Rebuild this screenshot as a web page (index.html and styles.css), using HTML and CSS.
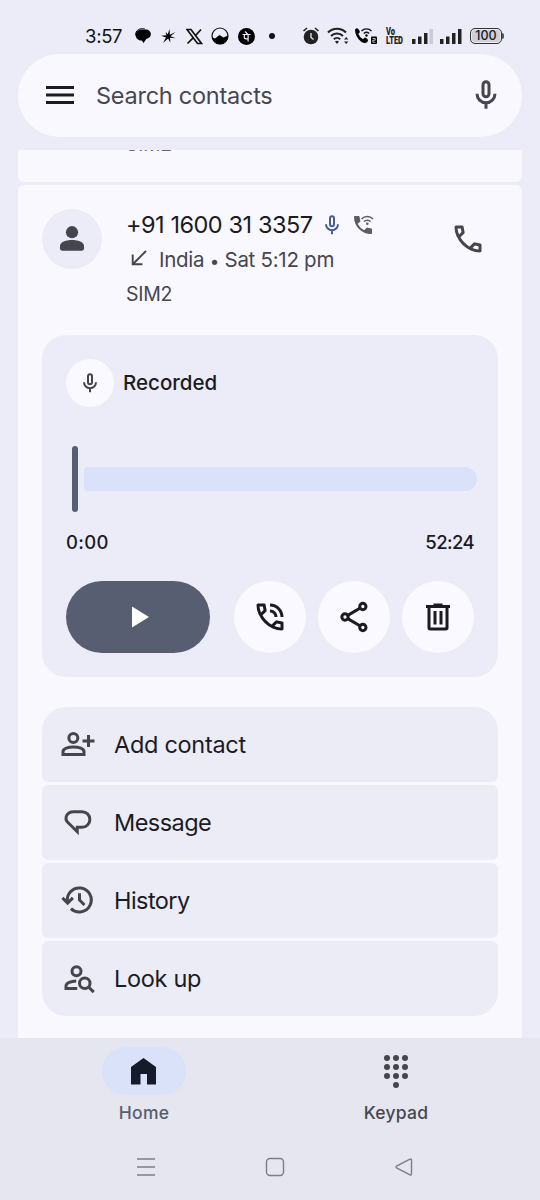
FILE: index.html
```html
<!DOCTYPE html>
<html lang="en">
<head>
<meta charset="utf-8">
<title>Phone</title>
<link rel="stylesheet" href="styles.css">
</head>
<body>
<svg class="defs" width="0" height="0">
  <symbol id="mic" viewBox="0 0 24 24"><g fill="none" stroke="currentColor" stroke-width="2"><rect x="10" y="3.200" width="4" height="10" rx="2"/><path d="M6 11.200a6 6 0 0 0 12 0M12 17.200v4"/></g></symbol>
  <symbol id="call" viewBox="0 0 24 24"><path fill="currentColor" d="M19.950 21q-3.125 0-6.175-1.362T8.225 15.775 4.363 10.225 3 4.050q0-.45.3-.75t.75-.3H8.100q.35 0 .625.238t.325.562l.65 3.500q.05.4-.025.675T9.400 8.450L6.975 10.900q.5.925 1.187 1.787t1.513 1.663q.775.775 1.625 1.438T13.100 17l2.350-2.350q.225-.225.588-.337t.712-.063l3.450.7q.35.1.575.363T21 15.900v4.050q0 .45-.3.750t-.75.3zM6.025 9l1.650-1.650L7.250 5H5.025q.125 1.025.35 2.025T6.025 9zm8.950 8.950q.975.425 1.988.675T19 18.950v-2.200l-2.350-.475z"/></symbol>
  <symbol id="wifi-call" viewBox="0 0 24 24"><path fill="currentColor" d="M20 15.500c-1.250 0-2.450-.2-3.570-.57a1 1 0 0 0-1.020.24l-2.200 2.200a15.050 15.050 0 0 1-6.590-6.580l2.200-2.210a1 1 0 0 0 .25-1.010A11.400 11.400 0 0 1 8.500 4a1 1 0 0 0-1-1H4a1 1 0 0 0-1 1c0 9.390 7.610 17 17 17a1 1 0 0 0 1-1v-3.500a1 1 0 0 0-1-1z"/><path fill="currentColor" d="M3.500 3.500H8L9.500 8.500 6 11zM21 20.500V16l-5-1.500-3 3.500z"/><g fill="none" stroke="currentColor" stroke-width="1.500"><path d="M10.500 6a8 8 0 0 1 11.500 0M13 8.600a4.600 4.600 0 0 1 6.600 0"/></g><circle cx="16.300" cy="10.800" r="1.300" fill="currentColor"/></symbol>
</svg>

<header class="status">
  <span class="clock">3:57</span>
  <svg class="s-chat" width="16" height="16" viewBox="0 0 16 16"><path d="M5.500 1.500H11a4.600 4.600 0 0 1 .5 9.200L8.500 15 6.800 12.500A5.500 5.500 0 0 1 5.500 1.500z"/><path d="M.8 7.500a5.500 5.500 0 0 1 5-6.700h4" stroke="#111" fill="none"/></svg>
  <svg class="s-star" width="15" height="15" viewBox="0 0 15 15"><path d="M8.500 0l.3 5.800L14.500 3 9.500 7.200l5 2-5.400-.5.200 4.800-2.200-4L2 14l3-5.500L0 6.800l5.500-.6L4.500 3l2.300 2.300z"/></svg>
  <svg class="s-x" width="17" height="17" viewBox="0 0 17 17"><path d="M1 1.500h4l10.500 14h-4zM15 1.500L9.600 7.500M7.400 9.700L1.500 15.500" fill="none" stroke="#111" stroke-width="1.700"/></svg>
  <svg class="s-wave" width="18" height="18" viewBox="0 0 18 18"><circle cx="9" cy="9" r="8" fill="none" stroke="#111" stroke-width="1.200"/><path d="M1 10l3 1.500L8.500 8l4 2.500L17 8.500A8 8 0 1 1 1 10z"/></svg>
  <svg class="s-pay" width="17" height="17" viewBox="0 0 17 17"><circle cx="8.500" cy="8.500" r="8.500"/><path d="M4.500 6.500h8M6.300 6.500v3.300q0 1.300 3.800 1M10.100 6.500v7M7 3.500l3 3" fill="none" stroke="#ececf8" stroke-width="1.200"/></svg>
  <span class="dot"></span>
  <svg class="s-alarm" width="18" height="18" viewBox="0 0 18 18"><circle cx="9" cy="10" r="7.300" fill="#222"/><path d="M1.500 4L5 1M16.500 4L13 1" stroke="#222" stroke-width="1.600"/><path d="M9 6v4.500l2.500 2" fill="none" stroke="#ececf8" stroke-width="1.300"/></svg>
  <svg class="s-wifi" width="23" height="18" viewBox="0 0 23 18"><g fill="none" stroke="#222" stroke-width="2"><path d="M1 5.500a12.500 12.500 0 0 1 18 0M4 9a8.300 8.300 0 0 1 12 0M6.800 12.300a4.600 4.600 0 0 1 6.400 0"/></g><path fill="#222" d="M8 14.500q2-1.300 4 0l-2 2.500zM17 12.500l2.200-2.500 2.200 2.500zM17 14.500l2.200 2.500 2.200-2.500z"/></svg>
  <svg class="s-call" width="24" height="20" viewBox="0 0 24 20"><path d="M1 3.500q2.500-2.500 4 .5l1 2-1.700 2q1.600 3.500 4.600 5.200l2-1.600q4 1.700 2.800 3.800-2 3-6.200.6Q1 11 1 3.500z"/><path d="M7.500 5a7 7 0 0 1 10 0M9.800 7.500a4 4 0 0 1 5.400 0" fill="none" stroke="#111" stroke-width="1.400"/><circle cx="12.500" cy="9.500" r="1.200"/><rect x="17" y="10.500" width="6" height="7.500" rx="1"/><path d="M18.700 12.500h2.500v1.700h-2.400v2h2.600" fill="none" stroke="#ececf8" stroke-width=".8"/></svg>
  <span class="volte"><b>Vo</b><b>LTED</b></span>
  <svg class="s-bars" width="52" height="17" viewBox="0 0 52 17"><rect x="1" y="11" width="3.500" height="5"/><rect x="7" y="8.500" width="3.500" height="7.500"/><rect x="13" y="5" width="3.500" height="11"/><rect x="18.500" y="1" width="3.500" height="15" fill="#cacad3"/><rect x="29" y="11" width="3.500" height="5"/><rect x="35" y="8.500" width="3.500" height="7.500"/><rect x="41" y="5" width="3.500" height="11"/><rect x="47" y="1" width="3.500" height="15"/></svg>
  <span class="battery">100</span><i class="battery-tip"></i>
</header>

<div class="search">
  <svg width="28" height="20" viewBox="0 0 28 20"><path d="M0 2.500h28M0 10h28M0 17.500h28" stroke="#1b1b21" stroke-width="2.900"/></svg>
  <span class="placeholder">Search contacts</span>
  <svg class="search-mic" width="36" height="36"><use href="#mic"/></svg>
</div>

<main class="list">
  <section class="previous"><span>SIM2</span></section>
  <section class="entry">
    <div class="summary">
      <div class="avatar"><svg width="24" height="25" viewBox="0 0 24 25"><circle cx="12" cy="6.200" r="6.100"/><path d="M0 20c0-8 24-8 24 0v2.200a2.500 2.500 0 0 1-2.500 2.500h-19A2.500 2.500 0 0 1 0 22.200z"/></svg></div>
      <div class="details">
        <div class="line number"><span class="num">+91 1600 31 3357</span><svg class="blue" width="24" height="24"><use href="#mic"/></svg><svg class="wc" width="24" height="24"><use href="#wifi-call"/></svg></div>
        <div class="line place"><svg width="16" height="16" viewBox="0 0 16 16"><path d="M15 1L2 14M1.700 4.500v9.800h9.800" fill="none" stroke="#46464f" stroke-width="1.900"/></svg><span>India <span class="bullet">•</span> Sat 5:12 pm</span></div>
        <div class="line sim">SIM2</div>
      </div>
      <svg class="dial" width="36" height="36"><use href="#call"/></svg>
    </div>

    <div class="recording">
      <div class="rec-head"><span class="rec-icon"><svg width="24" height="24"><use href="#mic"/></svg></span><span class="rec-title">Recorded</span></div>
      <div class="track"><i class="thumb"></i><i class="bar"></i></div>
      <div class="times"><span>0:00</span><span>52:24</span></div>
      <div class="actions">
        <span class="play"><svg width="17" height="22" viewBox="0 0 17 22"><path d="M0 .5l17 10.500L0 21.500z" fill="#fff"/></svg></span>
        <span class="round"><svg width="36" height="36" viewBox="0 0 24 24"><use href="#call"/><path fill="currentColor" d="M19 12h2c0-4.970-4.030-9-9-9v2c3.870 0 7 3.130 7 7zm-4 0h2c0-2.760-2.240-5-5-5v2c1.660 0 3 1.340 3 3z"/></svg></span>
        <span class="round"><svg width="36" height="36" viewBox="0 0 24 24" fill="none" stroke="currentColor" stroke-width="2"><circle cx="17.900" cy="5" r="2.100"/><circle cx="6" cy="12" r="2.100"/><circle cx="17.900" cy="19" r="2.100"/><path d="M7.800 10.900L16.200 6M7.800 13.100l8.400 4.900"/></svg></span>
        <span class="round"><svg width="36" height="36" viewBox="0 0 24 24" fill="none" stroke="currentColor" stroke-width="2"><path d="M4 5h16M9 4h6M6 5v14.200q0 .8.800.8h10.400q.8 0 .8-.8V5M10 8v9M14 8v9"/></svg></span>
      </div>
    </div>

    <nav class="menu">
      <a><svg width="36" height="36" viewBox="0 0 24 24" fill="none" stroke="currentColor" stroke-width="2"><circle cx="8.900" cy="8" r="3"/><path d="M2 19v-1.900c0-4.100 14-4.100 14 0V19zM19 6v8M15 10h8"/></svg><span>Add contact</span></a>
      <a><svg width="36" height="36" viewBox="0 0 24 24" fill="none" stroke="currentColor" stroke-width="2"><path d="M11.500 18.500V15.500h3.200a5.200 5.200 0 0 0 0-10.400H9C4.400 5.100 2.600 9.600 5.300 12.300z"/></svg><span>Message</span></a>
      <a><svg width="36" height="36" viewBox="0 0 24 24" fill="none" stroke="currentColor" stroke-width="2"><path d="M5 13.500a8 8 0 1 1 2.300 4.200M1.600 10.600l3.500 3.500 3.500-3.500M13 7.500V12l3.300 3.300"/></svg><span>History</span></a>
      <a><svg width="36" height="36" viewBox="0 0 24 24" fill="none" stroke="currentColor" stroke-width="2"><circle cx="11" cy="7.500" r="3"/><path d="M10.800 14c-3.300.1-6.800 1.300-6.800 3.300V19h7.500M18.900 17.800l3.600 3.600"/><circle cx="16.500" cy="15.500" r="3.500"/></svg><span>Look up</span></a>
    </nav>
  </section>
</main>

<footer class="bottom">
  <div class="tabs">
    <div class="tab home"><span class="pill"><svg width="25" height="27" viewBox="0 0 25 27"><path d="M12.500 0L25 9V26.500H16V16H9.500v10.500H0V9z" fill="#151a2c"/></svg></span><span>Home</span></div>
    <div class="tab"><span class="pill"><svg width="24" height="33" viewBox="0 0 24 33" fill="#45454e"><circle cx="3" cy="3" r="3"/><circle cx="12" cy="3" r="3"/><circle cx="21" cy="3" r="3"/><circle cx="3" cy="12" r="3"/><circle cx="12" cy="12" r="3"/><circle cx="21" cy="12" r="3"/><circle cx="3" cy="21" r="3"/><circle cx="12" cy="21" r="3"/><circle cx="21" cy="21" r="3"/><circle cx="12" cy="30" r="3"/></svg></span><span class="keypad">Keypad</span></div>
  </div>
  <div class="system">
    <svg width="18" height="20" viewBox="0 0 18 20"><path d="M0 2h18M0 10h18M0 18h18"/></svg>
    <svg width="20" height="20" viewBox="0 0 20 20"><rect x="1.500" y="1.500" width="17" height="17" rx="3.500"/></svg>
    <svg width="20" height="20" viewBox="0 0 20 20"><path d="M2.500 9.200Q1.500 10 2.500 10.800L16 17.800q1.500.6 1.500-1V3.200q0-1.600-1.500-1z"/></svg>
  </div>
</footer>
</body>
</html>
```
FILE: styles.css
```css
* { box-sizing: border-box; }
body {
  margin: 0;
  width: 540px;
  height: 1200px;
  overflow: hidden;
  display: flex;
  flex-direction: column;
  background: #ececf8;
  color: #1b1b23;
  font-family: Inter, "Liberation Sans", sans-serif;
}
svg, i { display: block; flex: none; }
.defs { height: 0; }

.status { height: 53px; padding: 19px 0 0 85px; display: flex; align-items: center; flex: none; }
.status > * { flex: none; }
.clock { width: 50px; font-size: 18.500px; letter-spacing: -.3px; color: #111; }
.s-star { margin-left: 10px; }
.s-x { margin-left: 10px; }
.s-wave { margin-left: 8px; }
.s-pay { margin-left: 9px; }
.dot { width: 6px; height: 6px; border-radius: 50%; background: #111; margin-left: 14px; }
.s-alarm { margin-left: 27px; }
.s-wifi { margin-left: 7px; }
.s-call { margin-left: 4px; }
.volte { display: flex; flex-direction: column; width: 19px; margin-left: 8px; font: 700 10.500px/9px Roboto, sans-serif; letter-spacing: -.1px; color: #222; transform: scaleX(.72); transform-origin: left; }
.s-bars { margin-left: 6px; fill: #222; }
.battery { margin-left: 7px; width: 32px; height: 16px; border: 1.500px solid #333; border-radius: 5px; background: #cfcfd8; box-shadow: inset 0 0 0 1px #ececf8; font: 500 12.500px/13px Inter, sans-serif; text-align: center; }
.battery-tip { width: 2px; height: 6px; background: #555; border-radius: 0 2px 2px 0; }

.search { margin: .5px 18px 0; height: 83.500px; border-radius: 42px; background: #f9f8ff; display: flex; align-items: center; padding: 0 18px 0 28px; flex: none; }
.placeholder { margin-left: 22px; font-size: 23.500px; letter-spacing: -.25px; color: #46464f; flex: 1; }
.search-mic { color: #45454e; }

.list { margin: 13px 18px 0; height: 888px; display: flex; flex-direction: column; gap: 3px; overflow: hidden; flex: none; }
.previous { height: 32.400px; background: #f9f8ff; border-radius: 0 0 6px 6px; padding-left: 108px; overflow: hidden; font-size: 19px; line-height: 22px; color: #66666f; flex: none; }
.previous span { display: block; margin-top: -16px; }
.entry { flex: 1; background: #f9f8ff; border-radius: 6px 6px 0 0; padding: 0 24px; }

.summary { height: 149.600px; display: flex; padding-top: 23.600px; }
.avatar { width: 60px; height: 60px; border-radius: 50%; background: #ececf8; display: flex; align-items: center; justify-content: center; fill: #45454e; }
.details { margin-left: 24px; flex: 1; color: #46464f; }
.line { display: flex; align-items: center; white-space: nowrap; }
.number { height: 32px; color: #1b1b21; font-size: 23.500px; }
.num { width: 184px; letter-spacing: -.55px; word-spacing: .4px; }
.blue { color: #475d92; margin-left: 10px; }
.wc { margin-left: 7px; color: #5c5c64; }
.place { height: 38px; font-size: 20.500px; letter-spacing: -.28px; }
.place svg { margin: 0 12px 3px 5px; }
.bullet { font-size: 17px; }
.sim { height: 31px; font-size: 19.500px; letter-spacing: -.3px; }
.dial { margin: 12px 12px 0 0; color: #45454e; }

.recording { height: 342px; border-radius: 24px; background: #ececf8; padding: 24px; }
.rec-head { display: flex; align-items: center; height: 48px; }
.rec-icon { width: 48px; height: 48px; border-radius: 50%; background: #faf9ff; display: flex; align-items: center; justify-content: center; color: #45454e; }
.rec-title { margin-left: 9px; font-size: 20.500px; font-weight: 500; }
.track { margin-top: 38px; height: 68px; display: flex; align-items: center; padding-left: 6px; }
.thumb { width: 6px; height: 66px; border-radius: 3px; background: #585e71; }
.bar { width: 393px; height: 24px; margin-left: 6px; background: #dae2fa; border-radius: 3px 12px 12px 3px; }
.times { height: 30px; margin-top: 14px; display: flex; align-items: center; justify-content: space-between; font-size: 18.500px; font-weight: 450; }
.times span:first-child { letter-spacing: .3px; }
.times span:last-child { letter-spacing: -.6px; }
.actions { margin-top: 24px; display: flex; gap: 12px; }
.play { width: 144px; height: 72px; border-radius: 36px; margin-right: 12px; background: #585e71; display: flex; align-items: center; justify-content: center; padding-left: 4px; }
.round { width: 72px; height: 72px; border-radius: 50%; background: #faf9ff; display: flex; align-items: center; justify-content: center; color: #1b1b21; }

.menu { margin-top: 30px; display: flex; flex-direction: column; gap: 3px; }
.menu a { height: 75px; border-radius: 6px; background: #ececf6; display: flex; align-items: center; padding-left: 18px; font-size: 23.500px; letter-spacing: -.3px; }
.menu a:nth-child(2), .menu a:nth-child(3) { letter-spacing: -.55px; }
.menu a:first-child { border-radius: 24px 24px 6px 6px; }
.menu a:last-child { border-radius: 6px 6px 24px 24px; }
.menu svg { margin-right: 18px; color: #45454e; }

.bottom { flex: 1; background: #e6e6f0; padding-top: 9px; }
.tabs { display: flex; padding: 0 18px; }
.tab { width: 252px; display: flex; flex-direction: column; align-items: center; font-size: 17.500px; font-weight: 500; letter-spacing: .25px; color: #46464f; }
.tab span:last-child { margin-top: 7px; line-height: 22px; }
.pill { width: 84px; height: 48px; border-radius: 24px; display: flex; align-items: center; justify-content: center; }
.home { color: #585e71; }
.home .pill { background: #dae2fa; }
.home .pill svg { margin-right: 1px; }
.system { display: flex; justify-content: space-between; padding: 33px 126px 0 137px; fill: none; stroke: #7d7d86; stroke-width: 1.400; }
```
